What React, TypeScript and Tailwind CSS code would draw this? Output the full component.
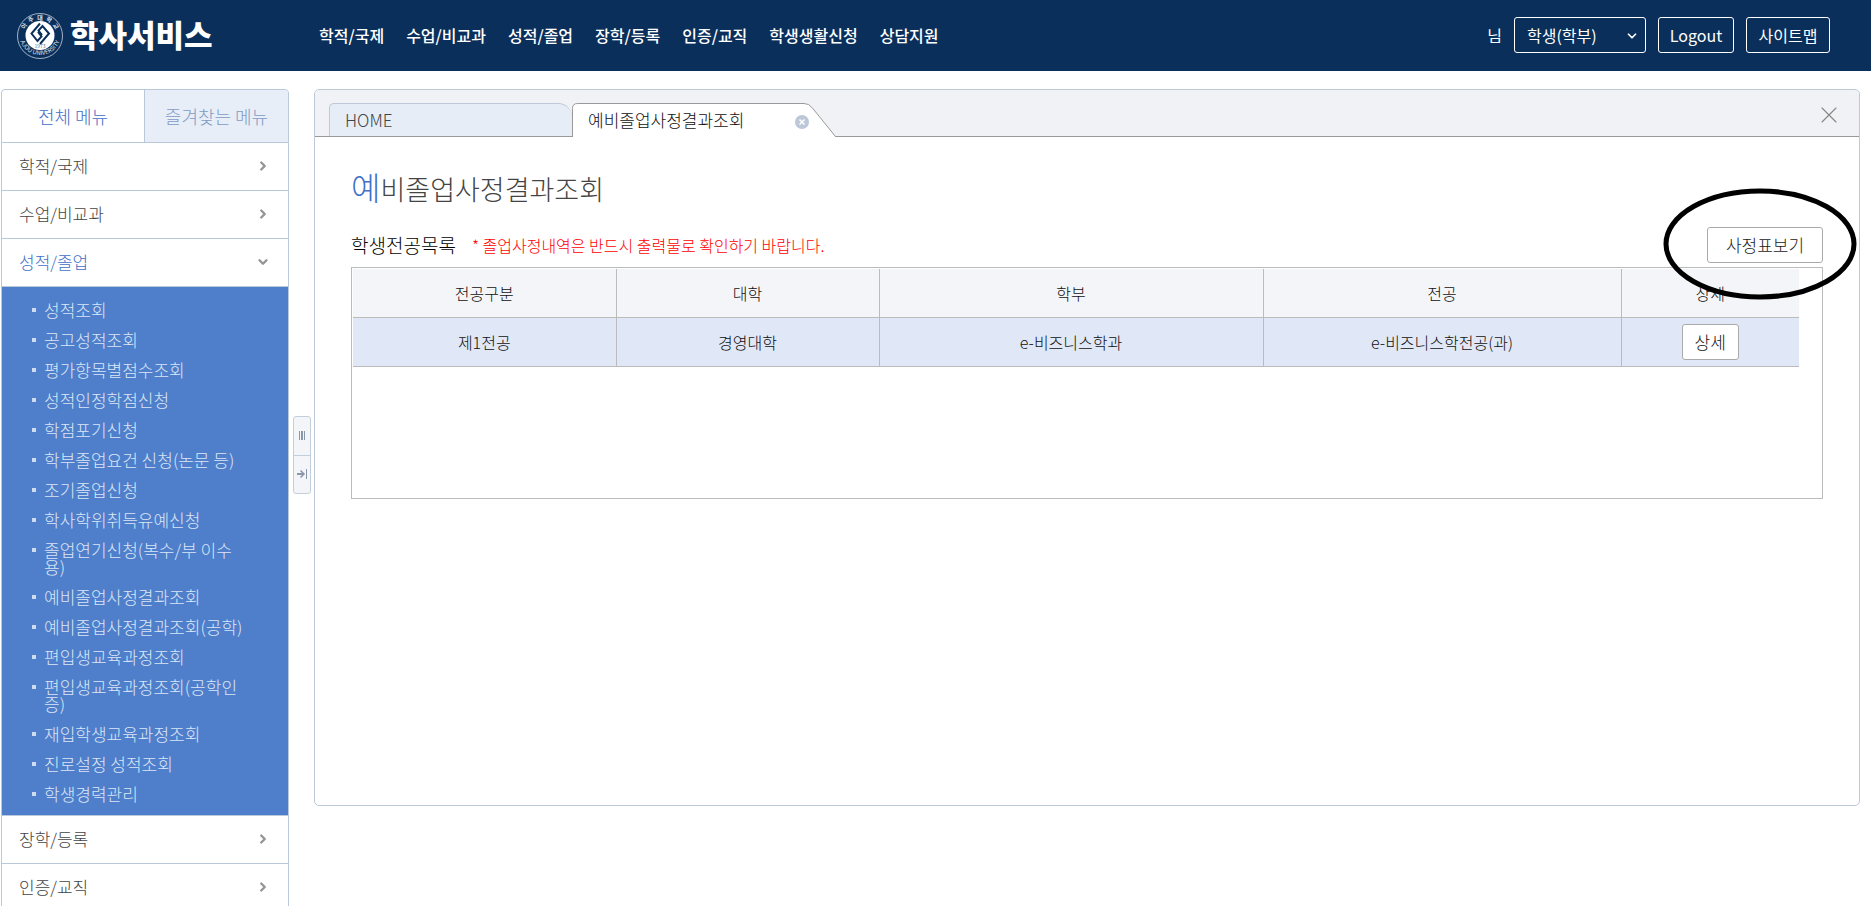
import { useState } from "react";
import { ChevronDown, ChevronRight, X } from "lucide-react";

const NAV = ["학적/국제", "수업/비교과", "성적/졸업", "장학/등록", "인증/교직", "학생생활신청", "상담지원"];

const GRADE_MENU = [
  "성적조회",
  "공고성적조회",
  "평가항목별점수조회",
  "성적인정학점신청",
  "학점포기신청",
  "학부졸업요건 신청(논문 등)",
  "조기졸업신청",
  "학사학위취득유예신청",
  "졸업연기신청(복수/부 이수용)",
  "예비졸업사정결과조회",
  "예비졸업사정결과조회(공학)",
  "편입생교육과정조회",
  "편입생교육과정조회(공학인증)",
  "재입학생교육과정조회",
  "진로설정 성적조회",
  "학생경력관리",
];

const MENU: { label: string; items: string[] }[] = [
  { label: "학적/국제", items: [] },
  { label: "수업/비교과", items: [] },
  { label: "성적/졸업", items: GRADE_MENU },
  { label: "장학/등록", items: [] },
  { label: "인증/교직", items: [] },
];

const COLUMNS = [
  { label: "전공구분", width: "w-[263px]" },
  { label: "대학", width: "w-[263px]" },
  { label: "학부", width: "w-[384px]" },
  { label: "전공", width: "w-[358px]" },
  { label: "상세", width: "w-[178px]" },
];

const MAJORS = [["제1전공", "경영대학", "e-비즈니스학과", "e-비즈니스학전공(과)"]];

function Emblem() {
  return (
    <svg viewBox="0 0 48 48" className="h-12 w-12 shrink-0" aria-hidden="true">
      <defs>
        <path id="ring-top" d="M7.500 24a16.500 16.500 0 0 1 33 0" />
        <path id="ring-bottom" d="M3 22a21 21 0 0 0 42 0" />
      </defs>
      <circle cx="24" cy="24" r="22.500" fill="none" stroke="#c9d3e0" strokeWidth="0.8" />
      <circle cx="24" cy="23.500" r="14.500" fill="#fff" />
      <text fill="#dfe6ef" fontSize="6" fontWeight="700" textAnchor="middle">
        <textPath href="#ring-top" startOffset="50%">
          {"아\u00a0\u00a0주\u00a0\u00a0대\u00a0\u00a0학\u00a0\u00a0교"}
        </textPath>
      </text>
      <text fill="#dfe6ef" fontSize="6" textAnchor="middle">
        <textPath href="#ring-bottom" startOffset="50%">AJOU UNIVERSITY</textPath>
      </text>
      <g fill="none" stroke="#0b2f5b" strokeWidth="2">
        <path d="M24 11.500 15.500 21.500 21.500 29 25.500 24.500 22 20" />
        <path d="M24 32 33 21.500 26.500 14 22.500 18.500 26 23" />
      </g>
      <text x="24" y="36" fill="#5c7391" fontSize="5" textAnchor="middle">1973</text>
    </svg>
  );
}

function Header() {
  return (
    <header className="flex h-[71px] items-center bg-[#0b2f5b] pr-[41px] pl-4 text-white">
      <a href="#" className="flex w-[303px] shrink-0 items-center gap-[6px]">
        <Emblem />
        <span className="pb-1 text-[31px] leading-none font-black">학사서비스</span>
      </a>
      <nav className="mb-0.5 flex flex-1 gap-[22px] text-base font-medium whitespace-nowrap">
        {NAV.map((label) => (
          <a key={label} href="#">
            {label}
          </a>
        ))}
      </nav>
      <div className="mb-0.5 flex items-center gap-3 text-base">
        <span>님</span>
        <div className="relative">
          <select
            aria-label="사용자 구분"
            className="h-9 w-[132px] appearance-none rounded-[3px] border border-white bg-transparent px-3"
          >
            <option>학생(학부)</option>
          </select>
          <ChevronDown className="pointer-events-none absolute top-3 right-[7px] h-[14px] w-[14px]" strokeWidth={3} />
        </div>
        <button className="h-9 w-[76px] rounded-[3px] border border-white">Logout</button>
        <button className="h-9 w-[84px] rounded-[3px] border border-white">사이트맵</button>
      </div>
    </header>
  );
}

function Sidebar() {
  const [open, setOpen] = useState("성적/졸업");

  return (
    <aside className="w-[288px] shrink-0">
      <div className="grid h-[54px] grid-cols-[142px_1fr] overflow-hidden rounded-t-[4px] border border-[#b9c9d9] text-lg font-light">
        <button className="text-[#4070c8]">전체 메뉴</button>
        <button className="border-l border-[#b9c9d9] bg-[#e7eef8] text-[#7f9bc4]">즐겨찾는 메뉴</button>
      </div>
      <ul className="border-x border-[#b9c9d9] text-[17px] font-light">
        {MENU.map(({ label, items }) => {
          const expanded = label === open;
          const Arrow = expanded ? ChevronDown : ChevronRight;
          return (
            <li key={label}>
              <button
                className={`flex h-12 w-full items-center justify-between border-b border-[#b9c9d9] pr-[18px] pb-0.5 pl-[17px] ${
                  expanded ? "text-[#4070c8]" : "text-[#444]"
                }`}
                onClick={() => setOpen(expanded ? "" : label)}
              >
                {label}
                <Arrow className="h-[14px] w-[14px] text-[#949494]" strokeWidth={4} />
              </button>
              {expanded && items.length > 0 && (
                <ul className="flex flex-col gap-[13px] border-b border-[#b9c9d9] bg-[#4f7fcb] pt-[14px] pr-[41px] pb-[13px] pl-[30px] leading-[17px] text-[#dbe6f6]">
                  {items.map((item) => (
                    <li key={item} className="flex gap-2">
                      <span className="mt-[7px] h-1 w-1 shrink-0 bg-[#cfdcf0]" />
                      <a href="#" className="break-all">
                        {item}
                      </a>
                    </li>
                  ))}
                </ul>
              )}
            </li>
          );
        })}
      </ul>
    </aside>
  );
}

function Splitter() {
  return (
    <div className="mx-1 mt-[327px] flex h-[78px] w-[18px] shrink-0 flex-col rounded-[3px] border border-[#c3cedb] bg-[#f3f5f8] text-[#8a97ab]">
      <button aria-label="크기 조절" className="flex flex-1 items-center justify-center border-b border-[#c3cedb]">
        <svg viewBox="0 0 6 9" className="h-[9px] w-[6px]">
          <path d="M.5 0v9M2.500 0v9M3.500 0v9M5.500 0v9" stroke="currentColor" />
        </svg>
      </button>
      <button aria-label="메뉴 접기" className="flex flex-1 items-center justify-center">
        <svg viewBox="0 0 10 10" className="h-[10px] w-[10px]" fill="none" stroke="currentColor">
          <path d="M0 5h6" strokeWidth="2" />
          <path d="M3.500 1.500 7 5 3.500 8.500" strokeWidth="1.500" />
          <path d="M9.500 0v10" />
        </svg>
      </button>
    </div>
  );
}

function TabBar() {
  return (
    <div className="flex h-[47px] items-end rounded-t-[5px] border-b border-[#999] bg-[#f1f2f6] pl-[14px]">
      <button className="h-[33px] w-[243px] rounded-tl-[5px] rounded-tr-[14px] border-t border-l border-[#bdc8d8] bg-[#e6edf7] pl-[15px] text-left text-[17px] font-light text-[#444]">
        HOME
      </button>
      <div className="relative -mb-px h-[34px] w-[264px]">
        <svg viewBox="0 0 264 34" className="absolute inset-0 h-full w-full" aria-hidden="true">
          <path d="M.5 34V5.500q0-5 5-5H232q5 0 8 4L263.500 34" fill="#fff" />
          <path d="M.5 34V5.500q0-5 5-5H232q5 0 8 4L263.500 33.500" fill="none" stroke="#999" />
        </svg>
        <div className="relative flex h-full items-center justify-between pr-[27px] pl-4">
          <button className="text-[17px] font-light text-[#111]">예비졸업사정결과조회</button>
          <button
            aria-label="탭 닫기"
            className="mt-1 flex h-[14px] w-[14px] items-center justify-center rounded-full bg-[#bcc7d8] text-white"
          >
            <X className="h-2 w-2" strokeWidth={5} />
          </button>
        </div>
      </div>
      <button aria-label="모두 닫기" className="mr-4 mb-[7px] ml-auto text-[#888]">
        <X className="h-7 w-7" strokeWidth={1} />
      </button>
    </div>
  );
}

function MajorTable() {
  return (
    <div className="h-[232px] border border-[#bbb] pt-px pr-[23px] pl-px">
      <table className="w-full table-fixed border-collapse text-center text-base text-[#111]">
        <thead>
          <tr className="h-12 border-b border-[#bbb] bg-[#f4f5f9]">
            {COLUMNS.map(({ label, width }) => (
              <th key={label} className={`${width} border-r border-[#bbb] font-light last:border-r-0`}>
                {label}
              </th>
            ))}
          </tr>
        </thead>
        <tbody>
          {MAJORS.map((row) => (
            <tr key={row[0]} className="h-[49px] border-b border-[#bbb] bg-[#e0e7f6]">
              {row.map((cell) => (
                <td key={cell} className="border-r border-[#bbb] font-light">
                  {cell}
                </td>
              ))}
              <td>
                <button className="h-9 w-[57px] rounded-[3px] border border-[#aaa] bg-white text-[17px] font-light">
                  상세
                </button>
              </td>
            </tr>
          ))}
        </tbody>
      </table>
    </div>
  );
}

export default function App() {
  return (
    <div className="h-screen overflow-hidden bg-white font-['Noto_Sans_CJK_KR',sans-serif]">
      <Header />
      <div className="flex items-start pt-[18px] pr-[11px] pl-px">
        <Sidebar />
        <Splitter />
        <main className="ml-[-1px] h-[717px] min-w-0 flex-1 rounded-[5px] border border-[#bdc8d8]">
          <TabBar />
          <div className="px-9 pt-[29px]">
            <h1 className="text-[27px] leading-10 font-light text-[#444]">
              <span className="text-[32px] text-[#4070c8]">예</span>비졸업사정결과조회
            </h1>
            <div className="mt-[18px] mb-1 flex h-9 items-center">
              <h2 className="text-[19px] font-light text-black">학생전공목록</h2>
              <p className="ml-4 text-base font-light text-[#f00]">* 졸업사정내역은 반드시 출력물로 확인하기 바랍니다.</p>
              <div className="relative ml-auto">
                <button className="h-9 w-[116px] rounded-[3px] border border-[#aaa] bg-white text-[17px] font-light text-[#222]">
                  사정표보기
                </button>
                {/* hand-drawn circle around the button */}
                <svg
                  viewBox="0 0 194 112"
                  className="pointer-events-none absolute -top-[39px] -right-[34px] z-10 h-[112px] w-[194px]"
                  aria-hidden="true"
                >
                  <ellipse cx="97" cy="56" rx="94" ry="53" fill="none" stroke="#000" strokeWidth="5" />
                </svg>
              </div>
            </div>
            <MajorTable />
          </div>
        </main>
      </div>
    </div>
  );
}
